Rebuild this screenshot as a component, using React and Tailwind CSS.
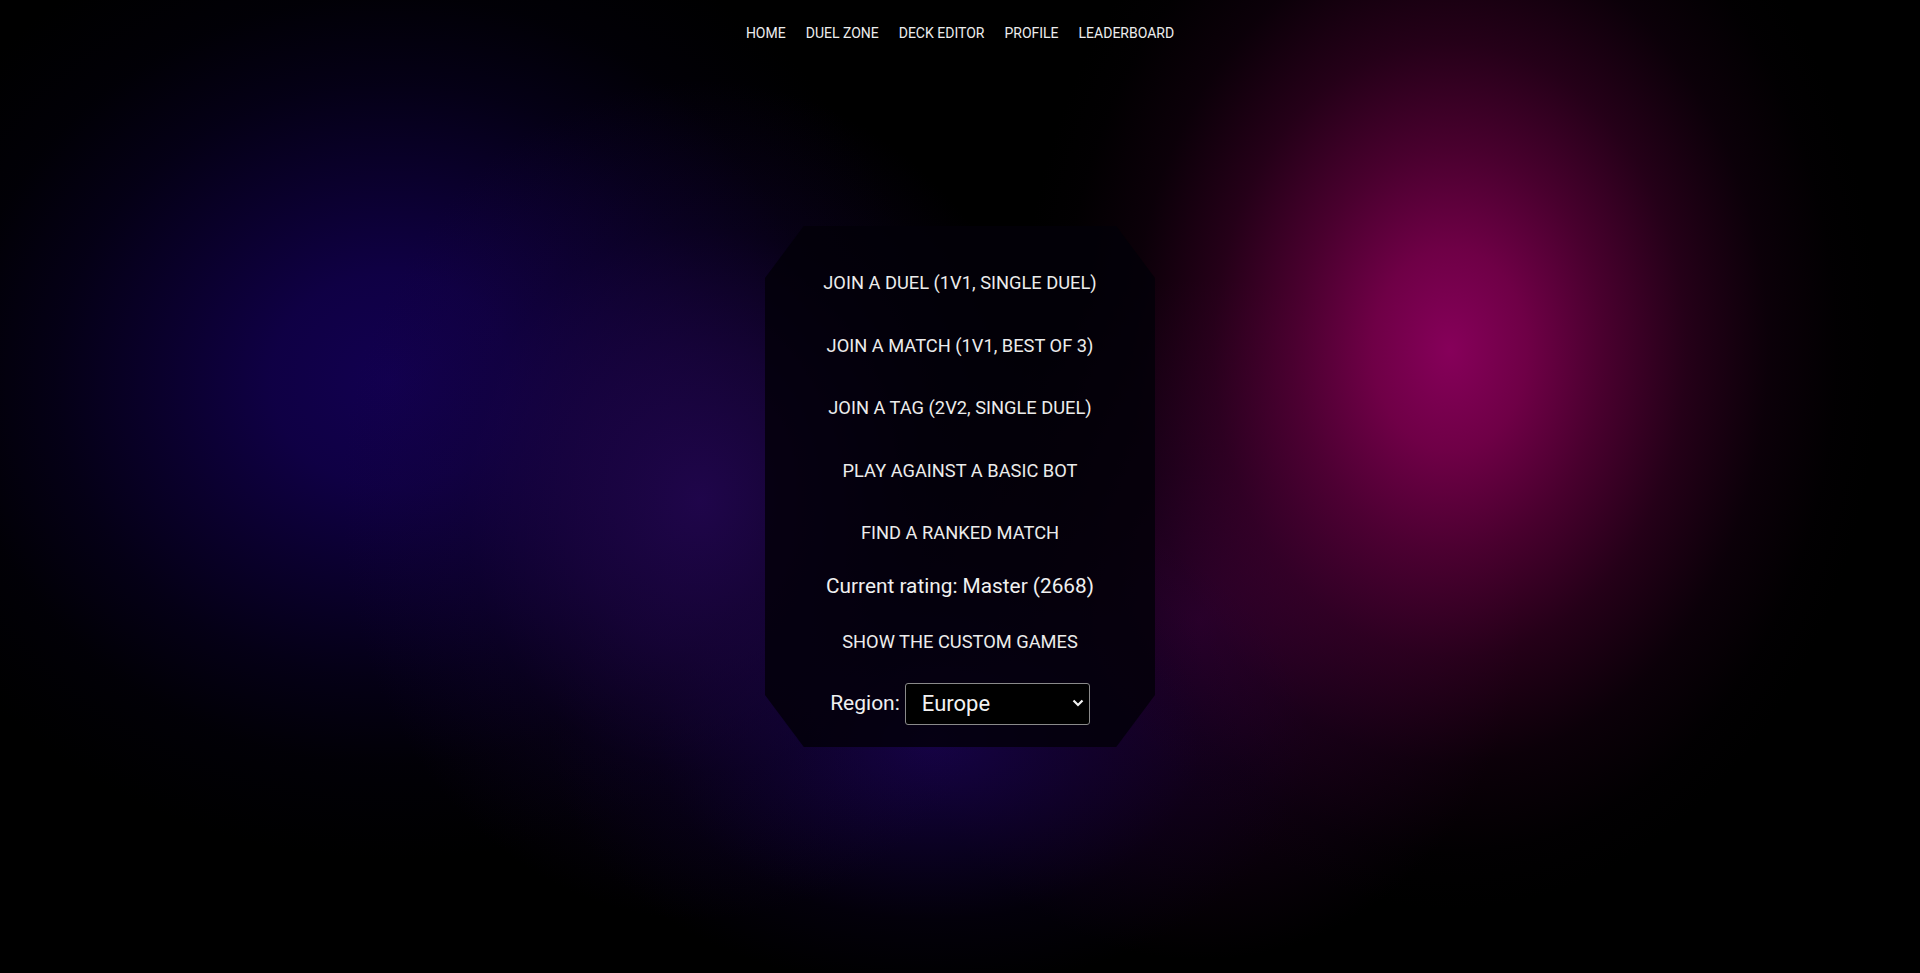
import React from "react";

export default function App() {
  const navItems = ["HOME", "DUEL ZONE", "DECK EDITOR", "PROFILE", "LEADERBOARD"];
  const buttons = [
    "JOIN A DUEL (1V1, SINGLE DUEL)",
    "JOIN A MATCH (1V1, BEST OF 3)",
    "JOIN A TAG (2V2, SINGLE DUEL)",
    "PLAY AGAINST A BASIC BOT",
    "FIND A RANKED MATCH",
  ];
  return (
    <div
      className="relative flex h-[973px] w-full flex-col overflow-hidden bg-black text-[#ececec] bg-[radial-gradient(ellipse_430px_560px_at_1450px_350px,rgba(134,0,90,1)_0%,rgba(126,0,80,0.88)_18%,rgba(108,0,68,0.68)_36%,rgba(82,0,54,0.45)_55%,rgba(52,0,40,0.22)_74%,rgba(25,0,25,0.07)_90%,rgba(0,0,0,0)_100%),radial-gradient(ellipse_360px_420px_at_700px_500px,rgba(34,6,80,0.9)_0%,rgba(30,5,72,0.65)_35%,rgba(22,3,60,0.3)_65%,rgba(0,0,0,0)_100%),radial-gradient(ellipse_380px_250px_at_930px_740px,rgba(24,3,78,0.9)_0%,rgba(20,2,66,0.55)_40%,rgba(14,0,50,0.2)_72%,rgba(0,0,0,0)_100%),radial-gradient(ellipse_320px_340px_at_1200px_620px,rgba(50,0,52,0.8)_0%,rgba(40,0,45,0.45)_45%,rgba(0,0,0,0)_100%),radial-gradient(ellipse_540px_480px_at_390px_380px,rgba(18,0,80,1)_0%,rgba(17,0,76,0.9)_22%,rgba(15,0,66,0.68)_42%,rgba(11,0,52,0.42)_62%,rgba(7,0,34,0.18)_80%,rgba(0,0,0,0)_100%)]"
      style={{ fontFamily: "Roboto, 'Liberation Sans', sans-serif" }}
    >
      <nav className="flex h-16 shrink-0 items-center justify-center gap-5 pt-[2px] text-[14px] text-[#ededed]">
        {navItems.map((n) => (
          <a key={n} className="cursor-pointer">
            {n}
          </a>
        ))}
      </nav>
      <main className="flex flex-1 items-center justify-center pb-16">
        <div className="flex w-[390px] flex-col items-center bg-[rgba(2,0,8,0.82)] pt-[25.8px] pb-[22.5px] [clip-path:polygon(10%_0,90%_0,100%_10%,100%_90%,90%_100%,10%_100%,0_90%,0_10%)]">
          {buttons.map((b) => (
            <button
              key={b}
              className="flex h-[62.5px] w-full items-center justify-center text-[18.3px] text-[#ececec]"
            >
              {b}
            </button>
          ))}
          <div className="mt-[1.4px] flex h-[43px] items-center text-[20.8px] text-[#f0f0f0]">
            Current rating: Master (2668)
          </div>
          <button className="flex h-[65.7px] w-full items-center justify-center text-[18.3px] text-[#ececec]">
            SHOW THE CUSTOM GAMES
          </button>
          <div className="mt-[8.4px] flex h-[42px] items-center gap-[5px] text-[21px]">
            <span className="text-[#f0f0f0]">Region:</span>
            <div className="relative">
              <select className="h-[42px] w-[185px] appearance-none rounded-[3px] border border-[#8a8a8a] bg-black pl-[16px] text-[22px] text-[#f2f2f2] outline-none">
                <option>Europe</option>
              </select>
              <svg
                className="pointer-events-none absolute right-[6px] top-[15px]"
                width="12"
                height="10"
                viewBox="0 0 12 10"
              >
                <path d="M1.5 2.5 L6 7 L10.5 2.5" fill="none" stroke="#f2f2f2" strokeWidth="2.2" />
              </svg>
            </div>
          </div>
        </div>
      </main>
    </div>
  );
}
